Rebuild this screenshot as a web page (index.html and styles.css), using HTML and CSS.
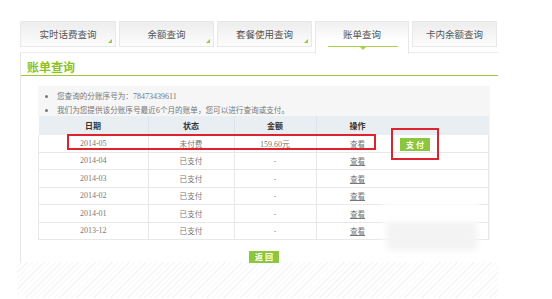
FILE: index.html
```html
<!DOCTYPE html>
<html lang="zh-CN">
<head>
  <meta charset="UTF-8" />
  <title>账单查询</title>
  <link rel="stylesheet" href="styles.css">
</head>
<body>

<div class="page">
  <ul class="tabs">
    <li class="tab corner">实时话费查询</li>
    <li class="tab corner">余额查询</li>
    <li class="tab corner">套餐使用查询</li>
    <li class="tab active">账单查询</li>
    <li class="tab last">卡内余额查询</li>
  </ul>

  <div class="panel">
    <h2 class="title">账单查询</h2>

    <div class="bill">
      <ul class="notes">
        <li>您查询的分账序号为：<span class="num">78473439611</span></li>
        <li>我们为您提供该分账序号最近6个月的账单，您可以进行查询或支付。</li>
      </ul>

      <table class="bill-table">
        <thead>
          <tr>
            <th class="c-date">日期</th>
            <th class="c-state">状态</th>
            <th class="c-money">金额</th>
            <th class="c-op">操作</th>
            <th class="c-pad"></th>
          </tr>
        </thead>
        <tbody>
          <tr>
            <td class="num">2014-05</td><td>未付费</td><td class="num">159.60元</td><td class="op"><a href="#">查看</a></td><td></td>
          </tr>
          <tr>
            <td class="num">2014-04</td><td>已支付</td><td>-</td><td class="op"><a href="#">查看</a></td><td></td>
          </tr>
          <tr>
            <td class="num">2014-03</td><td>已支付</td><td>-</td><td class="op"><a href="#">查看</a></td><td></td>
          </tr>
          <tr>
            <td class="num">2014-02</td><td>已支付</td><td>-</td><td class="op"><a href="#">查看</a></td><td></td>
          </tr>
          <tr>
            <td class="num">2014-01</td><td>已支付</td><td>-</td><td class="op"><a href="#">查看</a></td><td></td>
          </tr>
          <tr>
            <td class="num">2013-12</td><td>已支付</td><td>-</td><td class="op"><a href="#">查看</a></td><td></td>
          </tr>
        </tbody>
      </table>

      <!-- annotation marks drawn over the table -->
      <div class="mark mark-row"></div>
      <div class="mark mark-pay"><a class="btn" href="#">支 付</a></div>
      <div class="smudge"><div class="smudge-inner"></div></div>
    </div>

    <div class="back-row"><a class="btn" href="#">返 回</a></div>
  </div>

  <div class="hatch"></div>
</div>

</body>
</html>
```

FILE: styles.css
```css
body {
  margin: 0;
  padding: 0;
  background: #fff;
  font-family: "Noto Sans CJK SC", "Liberation Sans", sans-serif;
  color: #555;
  width: 552px;
  height: 299px;
  overflow: hidden;
}

.page {
  width: 478px;
  margin-left: 20px;
  padding-top: 21px;
}

/* tabs */
.tabs {
  list-style: none;
  margin: 0;
  padding: 0;
  display: flex;
  gap: 3px;
  align-items: flex-start;
  height: 32px;
  position: relative;
  z-index: 2;
}

.tab {
  position: relative;
  box-sizing: border-box;
  width: 95px;
  height: 26px;
  line-height: 24px;
  text-align: center;
  font-size: 9.5px;
  color: #555;
  border: 1px solid #e8e8e8;
  background: linear-gradient(#ededed, #fcfcfc);
}

.tab:first-child {
  width: 96px;
}

.tab.active {
  width: 94px;
  height: 33px;
  border-bottom: none;
  background: linear-gradient(#f0f0f0, #fff 60%);
}

.tab.active::before {
  content: "";
  position: absolute;
  left: 12px;
  right: 10px;
  top: 24px;
  border-top: 1px solid #a9d24a;
}

.tab.active::after {
  content: "";
  position: absolute;
  left: 43px;
  top: 24px;
  border-left: 4px solid transparent;
  border-right: 4px solid transparent;
  border-top: 4px solid #a9d24a;
}

.tab.last {
  width: 85px;
}

.tab.corner::after {
  content: "";
  position: absolute;
  right: 3px;
  bottom: 3px;
  border-left: 4px solid transparent;
  border-bottom: 4px solid #9cc83a;
}

/* panel */
.panel {
  margin-top: -1px;
  border-top: 1px solid #ececec;
  border-left: 1px solid #e6e6e6;
  height: 209px;
}

.title {
  margin: 0;
  height: 22px;
  padding-left: 6px;
  line-height: 28px;
  font-size: 12px;
  font-weight: bold;
  color: #8cc21f;
  border-bottom: 1px solid #9ccd33;
}

.bill {
  position: relative;
  margin: 10px 8px 0 17px;
  background: #f6f6f6;
}

.notes {
  margin: 0;
  padding: 3px 0 0 19px;
  font-size: 7.6px;
  line-height: 13px;
  color: #777;
}

.notes li::marker {
  font-size: 7px;
  color: #777;
}

.num {
  font-family: "Liberation Serif", serif;
  font-size: 8px;
}

.bill-table {
  width: 451px;
  border-collapse: collapse;
  background: #fff;
  font-size: 7.6px;
  text-align: center;
  color: #777;
}

.bill-table th {
  height: 19px;
  padding: 0;
  background: #e9eef3;
  color: #333;
  font-size: 8px;
  font-weight: bold;
  border-right: 1px solid #dde3ea;
}

.bill-table th.c-op,
.bill-table th.c-pad {
  border-right: none;
}

.bill-table td {
  height: 16.5px;
  padding: 0;
  border: 1px solid #e8e8e8;
  border-top: none;
}

.bill-table td.op {
  border-right: none;
}

.bill-table td:last-child {
  border-left: none;
}

.c-date { width: 109px; }
.c-state { width: 85px; }
.c-money { width: 81px; }
.c-op { width: 82px; }

.bill-table a {
  color: #777;
  text-decoration: underline;
}

/* annotation overlays */
.mark {
  position: absolute;
  box-sizing: border-box;
  border: 2px solid #e0222e;
}

.mark-row {
  left: 29px;
  top: 48px;
  width: 309px;
  height: 16px;
}

.mark-pay {
  left: 353px;
  top: 42px;
  width: 48px;
  height: 32px;
  display: flex;
  align-items: center;
  justify-content: center;
}

.btn {
  display: inline-block;
  padding: 0 6px;
  height: 12px;
  line-height: 12px;
  background: #8cc63f;
  color: #fff;
  font-size: 8px;
  font-weight: bold;
  text-decoration: none;
}

.mark-pay .btn {
  width: 30px;
  height: 13px;
  line-height: 13px;
  padding: 0;
  text-align: center;
  box-sizing: border-box;
}

.smudge {
  position: absolute;
  left: 345px;
  top: 116px;
  width: 96px;
  height: 52px;
  background: rgba(255, 255, 255, 0.92);
  filter: blur(3px);
}

.smudge-inner {
  margin: 20px 2px 0 4px;
  height: 28px;
  background: #f3f3f3;
}

.back-row {
  display: flex;
  justify-content: center;
  height: 12px;
  margin: 11px 8px 0 17px;
}

/* striped strip under the panel */
.hatch {
  margin-left: -3px;
  height: 36px;
  background: repeating-linear-gradient(135deg, #fff 0, #fff 3px, #f5f5f5 3px, #f5f5f5 4px);
}
```
